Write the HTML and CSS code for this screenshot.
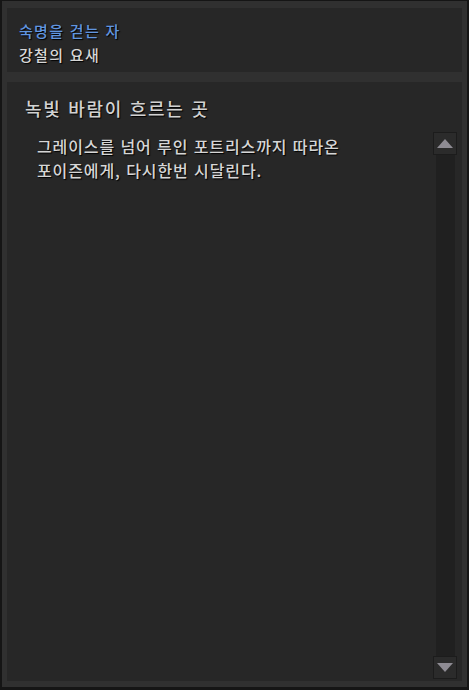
FILE: index.html
```html
<!DOCTYPE html>
<html lang="ko">
  <head>
    <meta charset="UTF-8" />
    <meta name="viewport" content="width=device-width, initial-scale=1.0" />
    <title>녹빛 바람이 흐르는 곳</title>
    <link rel="stylesheet" href="styles.css">
  </head>
  <body>
    <div class="frame">
      <div class="header">
        <div class="quest-title">숙명을 걷는 자</div>
        <div class="quest-area">강철의 요새</div>
      </div>
      <div class="content">
        <div class="text">
          <div class="place">녹빛 바람이 흐르는 곳</div>
          <div class="desc">
            그레이스를 넘어 루인 포트리스까지 따라온<br />
            포이즌에게, 다시한번 시달린다.
          </div>
        </div>
        <div class="scrollbar">
          <button class="scroll-btn up"><span class="arrow"></span></button>
          <div class="track"></div>
          <button class="scroll-btn down"><span class="arrow"></span></button>
        </div>
      </div>
    </div>
  </body>
</html>
```

FILE: styles.css
```css
body,
html {
  height: 100%;
  margin: 0;
  overflow: hidden;
  background: #141414;
  font-family: "Noto Sans CJK KR", "Noto Sans", sans-serif;
}
.frame {
  box-sizing: border-box;
  height: 690px;
  width: 469px;
  border: 2px solid #151515;
  border-top-width: 1px;
  border-bottom-width: 3px;
  background: #303030;
  padding: 7px 5px 6px 5px;
  display: flex;
  flex-direction: column;
  gap: 10px;
}
.header {
  background: #272727;
  height: 64px;
  box-sizing: border-box;
  padding: 11px 0 0 12px;
  font-size: 15px;
  font-weight: 500;
  line-height: 24px;
  letter-spacing: 1.3px;
  text-shadow: 1px 1px 1px #000;
}
.quest-title {
  color: #6196e0;
}
.quest-area {
  color: #d6d6d6;
}
.content {
  flex: 1;
  background: #272727;
  display: flex;
}
.text {
  flex: 1;
  padding: 14px 0 0 18px;
  text-shadow: 1px 1px 1px #000;
}
.place {
  color: #d2d2d2;
  font-size: 18px;
  font-weight: 500;
  line-height: 24px;
  letter-spacing: 1.7px;
}
.desc {
  margin: 14px 0 0 12px;
  color: #d6d6d6;
  font-size: 16px;
  font-weight: 500;
  line-height: 24px;
  letter-spacing: 0.9px;
}
.scrollbar {
  width: 24px;
  margin: 50px 5px 2px 0;
  display: flex;
  flex-direction: column;
  align-items: center;
}
.scroll-btn {
  box-sizing: border-box;
  width: 24px;
  height: 23px;
  padding: 0;
  background: #2b2b2b;
  border: 1px solid #1c1c1c;
  display: flex;
  justify-content: center;
  align-items: center;
}
.track {
  flex: 1;
  width: 19px;
  background: #202020;
}
.arrow {
  width: 0;
  height: 0;
  border-left: 8px solid transparent;
  border-right: 8px solid transparent;
}
.up .arrow {
  border-bottom: 9px solid #8e8b93;
}
.down .arrow {
  border-top: 9px solid #8e8b93;
}
```
